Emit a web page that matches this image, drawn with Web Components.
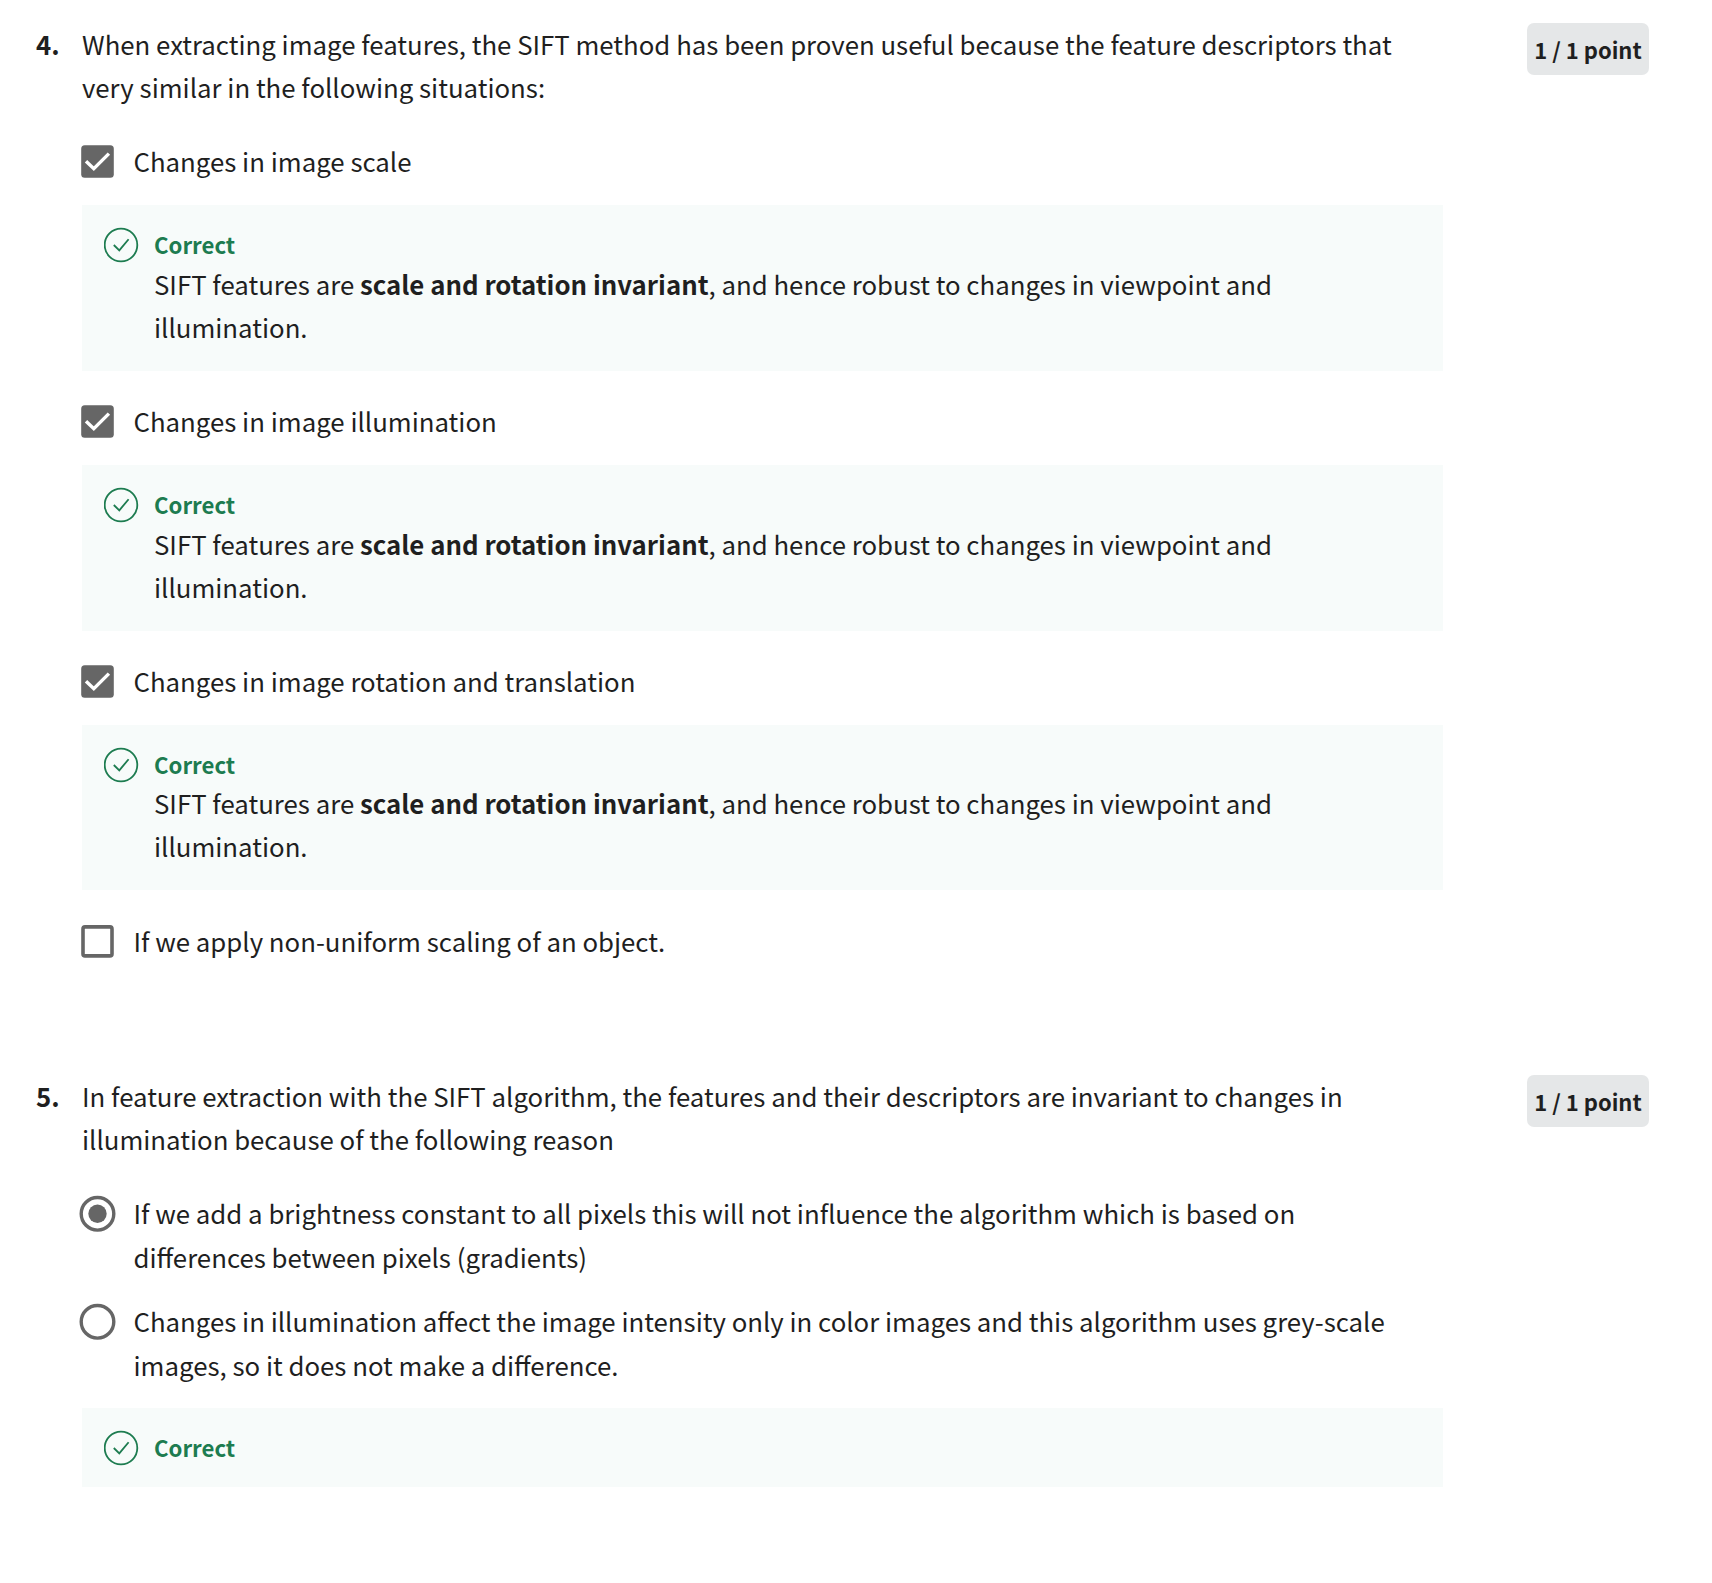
<!DOCTYPE html>
<html lang="en">
<head>
<meta charset="utf-8">
<title>Quiz results</title>
<style>
  body { margin: 0; background: #fff; color: #1f1f1f; font-family: "Noto Sans CJK SC", "Source Sans Pro", sans-serif; font-size: 25.795px; line-height: 43px; }
  quiz-feedback.last { --height: 165px; --after: 29px; --title-gap: 0px; }
</style>
</head>
<body>
<quiz-results>
  <quiz-question number="4" points="1 / 1 point">
    <span slot="prompt">When extracting image features, the SIFT method has been proven useful because the feature descriptors that<br>very similar in the following situations:</span>
    <quiz-option type="checkbox" checked>Changes in image scale</quiz-option>
    <quiz-feedback>SIFT features are <b>scale and rotation invariant</b>, and hence robust to changes in viewpoint and<br>illumination.</quiz-feedback>
    <quiz-option type="checkbox" checked>Changes in image illumination</quiz-option>
    <quiz-feedback>SIFT features are <b>scale and rotation invariant</b>, and hence robust to changes in viewpoint and<br>illumination.</quiz-feedback>
    <quiz-option type="checkbox" checked>Changes in image rotation and translation</quiz-option>
    <quiz-feedback class="last">SIFT features are <b>scale and rotation invariant</b>, and hence robust to changes in viewpoint and<br>illumination.</quiz-feedback>
    <quiz-option type="checkbox">If we apply non-uniform scaling of an object.</quiz-option>
  </quiz-question>
  <quiz-question number="5" points="1 / 1 point">
    <span slot="prompt">In feature extraction with the SIFT algorithm, the features and their descriptors are invariant to changes in<br>illumination because of the following reason</span>
    <quiz-option type="radio" checked>If we add a brightness constant to all pixels this will not influence the algorithm which is based on<br>differences between pixels (gradients)</quiz-option>
    <quiz-option type="radio">Changes in illumination affect the image intensity only in color images and this algorithm uses grey-scale<br>images, so it does not make a difference.</quiz-option>
    <quiz-feedback compact></quiz-feedback>
  </quiz-question>
</quiz-results>
<script>
class QuizResults extends HTMLElement {
  constructor() {
    super();
    this.attachShadow({ mode: "open" }).innerHTML = `
      <style>:host { display: flex; flex-direction: column; gap: 89px; padding: 22px 63px 0 36px; }</style>
      <slot></slot>`;
  }
}
class QuizQuestion extends HTMLElement {
  constructor() {
    super();
    this.attachShadow({ mode: "open" }).innerHTML = `
      <style>
        :host { display: flex; align-items: flex-start; white-space: nowrap; }
        .number { width: 46px; flex: none; font-weight: 700; }
        .body { width: 1361px; flex: none; }
        .prompt { margin-bottom: 31px; }
        .points { margin: 1px 0 0 auto; box-sizing: border-box; width: 122px; height: 52px; border-radius: 7px; background: #e5e7e8;
          display: flex; justify-content: center; font-size: 22px; line-height: 53px; font-weight: 700; }
      </style>
      <div class="number"></div>
      <div class="body"><div class="prompt"><slot name="prompt"></slot></div><slot></slot></div>
      <div class="points"></div>`;
  }
  connectedCallback() {
    this.shadowRoot.querySelector(".number").textContent = this.getAttribute("number") + ".";
    this.shadowRoot.querySelector(".points").textContent = this.getAttribute("points");
  }
}
const icons = {
  checkboxOn: `<rect x="1.2" y="1.3" width="32.6" height="32.5" rx="3.5" fill="#666"/><path d="M6 17.2 13.8 24.7 28.9 9.6" fill="none" stroke="#fff" stroke-width="3.4"/>`,
  checkboxOff: `<rect x="3" y="2.9" width="29" height="29" rx="2" fill="#fff" stroke="#666" stroke-width="3.6"/>`,
  radioOn: `<circle cx="17.5" cy="17.8" r="16.3" fill="#fff" stroke="#666" stroke-width="3.4"/><circle cx="17.5" cy="17.8" r="9.2" fill="#666"/>`,
  radioOff: `<circle cx="17.5" cy="17.8" r="16.3" fill="#fff" stroke="#666" stroke-width="3.4"/>`
};
class QuizOption extends HTMLElement {
  constructor() {
    super();
    this.attachShadow({ mode: "open" }).innerHTML = `
      <style>
        :host { display: flex; align-items: flex-start; height: 66px; line-height: 44px; }
        :host([type="radio"]) { height: 108px; }
        svg { flex: none; width: 35px; height: 35px; margin: 5px 18.5px 0 -2px; overflow: visible; }
      </style>
      <svg viewBox="0 0 35 35" aria-hidden="true"></svg>
      <div><slot></slot></div>`;
  }
  connectedCallback() {
    this.shadowRoot.querySelector("svg").innerHTML = icons[this.getAttribute("type") + (this.hasAttribute("checked") ? "On" : "Off")];
  }
}
class QuizFeedback extends HTMLElement {
  constructor() {
    super();
    this.attachShadow({ mode: "open" }).innerHTML = `
      <style>
        :host { display: flex; align-items: flex-start; box-sizing: border-box; height: var(--height, 166px); margin-bottom: var(--after, 28px); padding: 22px 22px 0; background: #f7fbfa; }
        :host([compact]) { height: 79px; margin: 1px 0 0; }
        svg { flex: none; width: 36px; height: 36px; margin-right: 14px; }
        .title { color: #1d7c50; font-weight: 700; font-size: 22.2px; line-height: 34px; margin-bottom: var(--title-gap, 1px); }
      </style>
      <svg viewBox="0 0 36 36" fill="none" stroke="#1d7c50" stroke-width="1.8" aria-hidden="true"><circle cx="17" cy="18" r="16.3"/><path d="M9.8 18 15.3 23.4 24.6 12.2"/></svg>
      <div><div class="title">Correct</div><slot></slot></div>`;
  }
}
customElements.define("quiz-results", QuizResults);
customElements.define("quiz-question", QuizQuestion);
customElements.define("quiz-option", QuizOption);
customElements.define("quiz-feedback", QuizFeedback);
</script>
</body>
</html>
